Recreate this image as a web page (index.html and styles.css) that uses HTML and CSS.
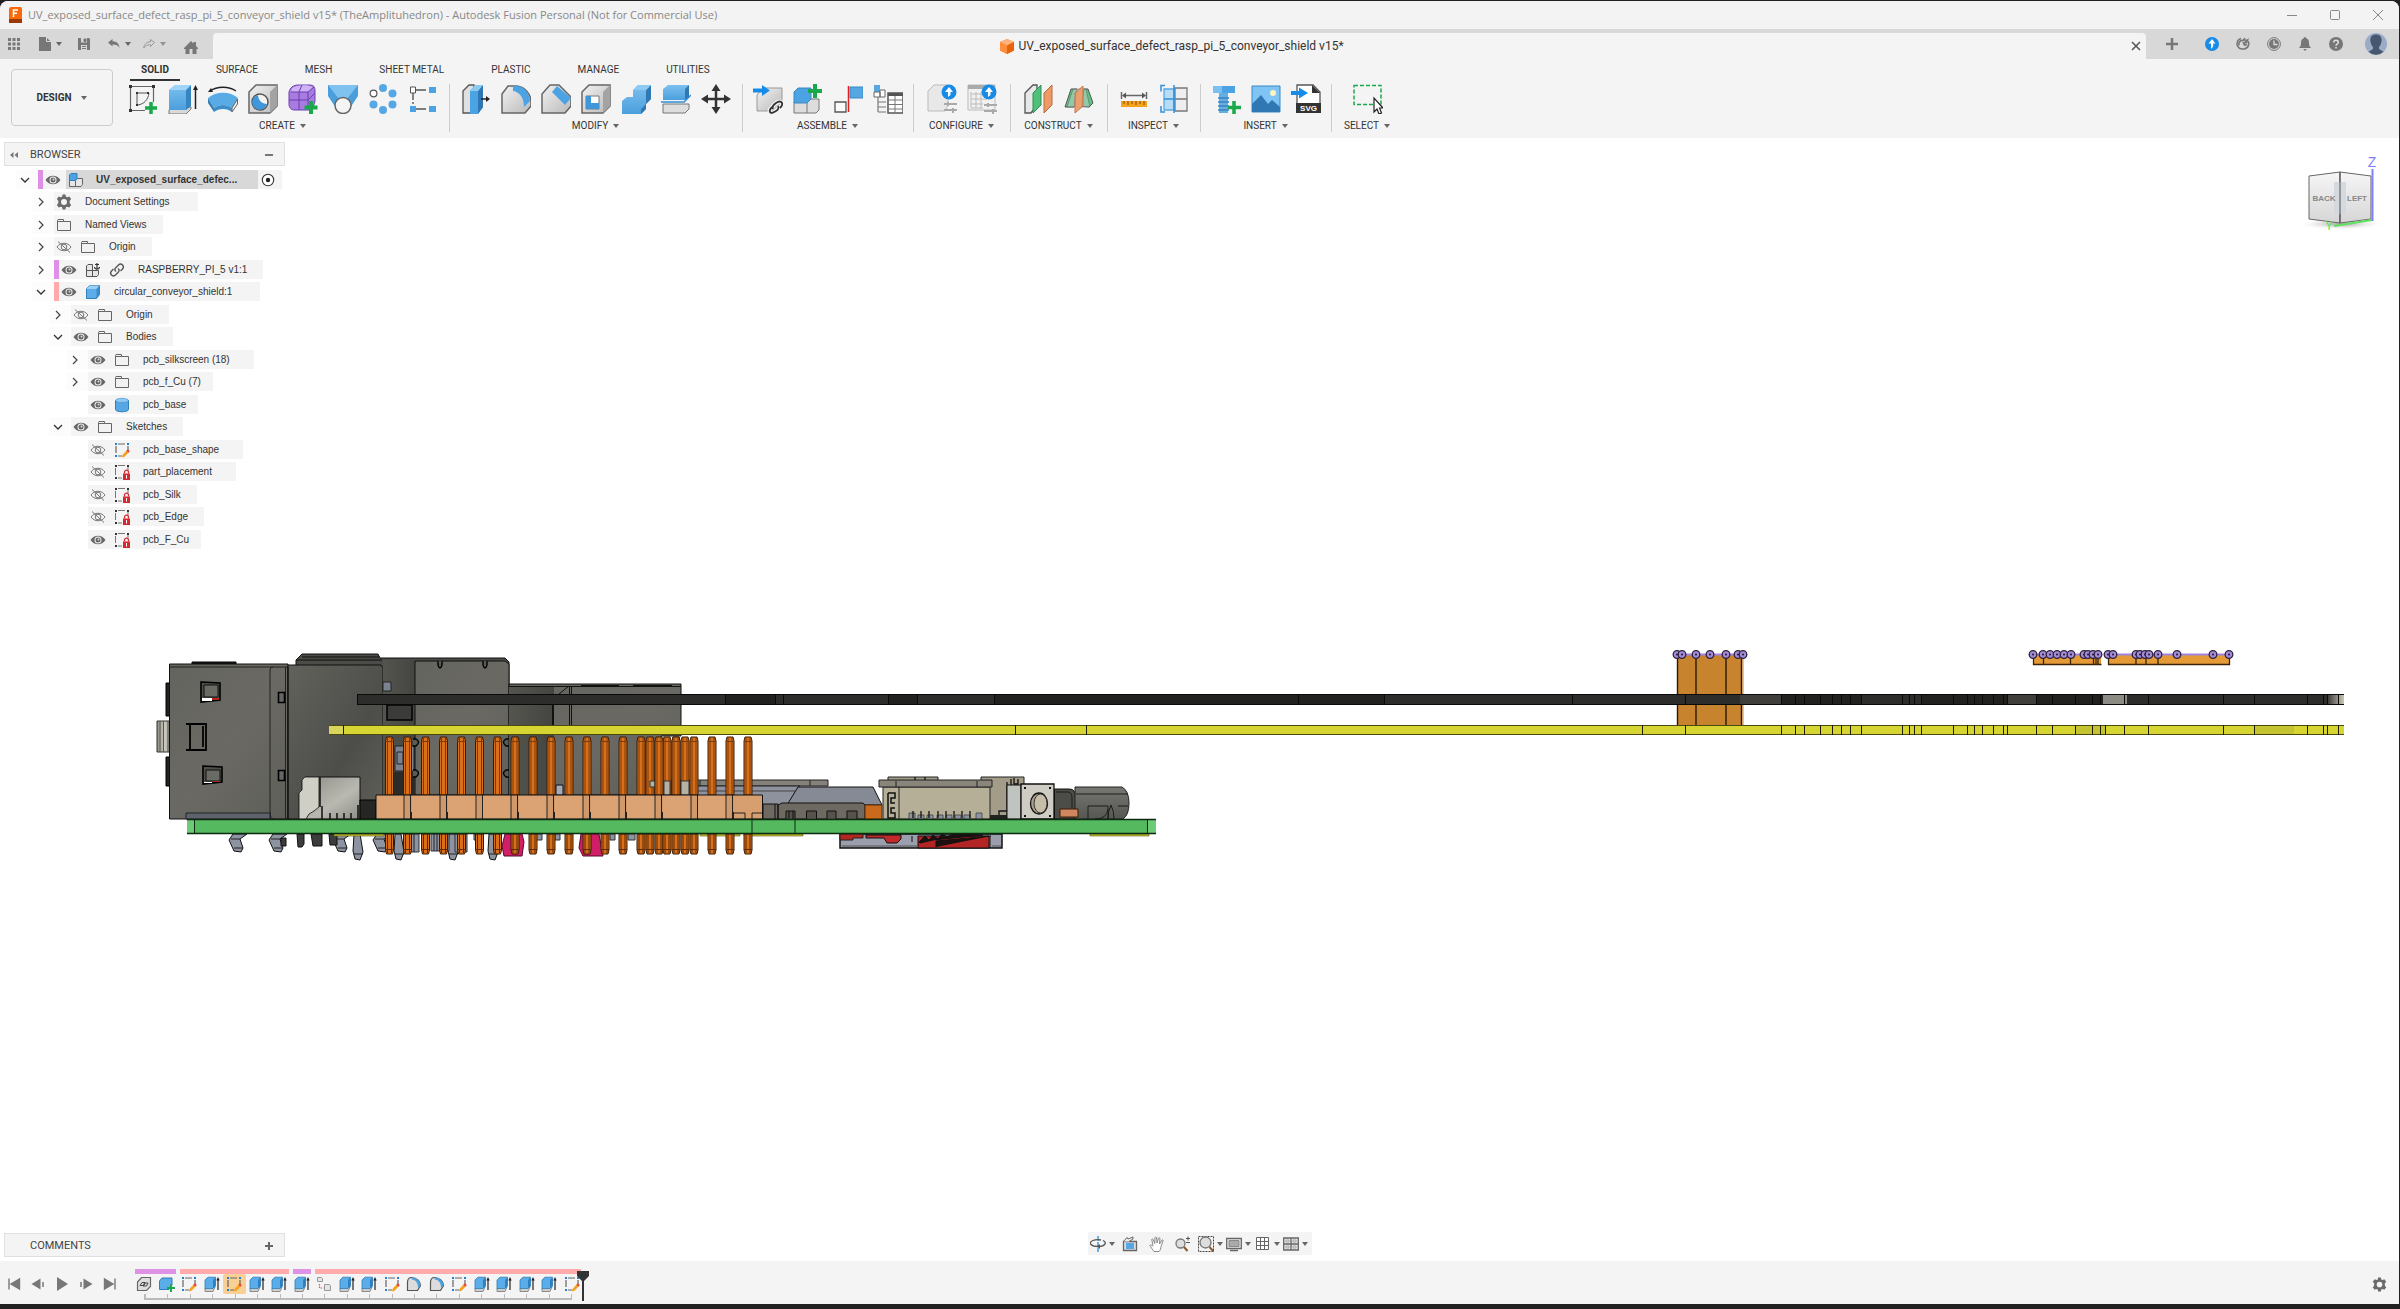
FILE: index.html
```html
<!DOCTYPE html>
<html lang="en">
<head>
<meta charset="utf-8">
<title>UV_exposed_surface_defect_rasp_pi_5_conveyor_shield v15*</title>
<link rel="stylesheet" href="styles.css">
</head>
<body>
<svg class="sprite" aria-hidden="true">
  <defs>
    <linearGradient id="gSteel" x1="0" y1="0" x2="1" y2="1"><stop offset="0" stop-color="#f2f2f2"/><stop offset="1" stop-color="#b9b9b9"/></linearGradient>
    <linearGradient id="gBlue" x1="0" y1="0" x2="0" y2="1"><stop offset="0" stop-color="#7cc0f0"/><stop offset="1" stop-color="#4b9fdc"/></linearGradient>
    <symbol id="i-caret" viewBox="0 0 8 6"><path d="M1 1h6L4 5z" fill="#666"/></symbol>
    <symbol id="i-right" viewBox="0 0 10 10"><path d="M3 1l4 4-4 4" fill="none" stroke="#444" stroke-width="1.2"/></symbol>
    <symbol id="i-down" viewBox="0 0 10 10"><path d="M1 3l4 4 4-4" fill="none" stroke="#333" stroke-width="1.3"/></symbol>
    <symbol id="i-eye" viewBox="0 0 16 16"><path d="M0.5 8C4 2.300 12 2.300 15.500 8C12 13.700 4 13.700 0.500 8z" fill="#666"/><circle cx="8" cy="8" r="3.500" fill="#f4f4f4"/><circle cx="8" cy="8" r="2.500" fill="#666"/><circle cx="8.500" cy="7.500" r="1" fill="#ddd"/></symbol>
    <symbol id="i-hidden" viewBox="0 0 16 16"><path d="M1 8C4.500 3 11.500 3 15 8C11.500 13 4.500 13 1 8zM2 2.500L14 13.500" fill="none" stroke="#777"/><circle cx="8" cy="8" r="2.800" fill="none" stroke="#777"/></symbol>
    <symbol id="i-folder" viewBox="0 0 16 16"><path d="M1.500 3.500v10h13v-9h-7v-2h-5.500zM1.500 4.500h6" fill="#f2f2f2" stroke="#666"/></symbol>
    <symbol id="i-gear" viewBox="0 0 16 16"><path fill-rule="evenodd" fill="#6b6b6b" d="M6.500 0.500h3l.4 2.200 1.300.6 2-.9 2 2.700-1.500 1.600v2.600l1.500 1.600-2 2.700-2-.9-1.300.6-.4 2.200h-3l-.4-2.200-1.300-.6-2 .9-2-2.700 1.500-1.600V6.700L.800 5.100l2-2.700 2 .9 1.300-.6zM8 5a3 3 0 100 6 3 3 0 000-6z"/></symbol>
    <symbol id="i-assembly" viewBox="0 0 16 16"><path d="M1.500 8.500h6v6h-6zM7.500 8.500l1.500-2h5.500v6l-1.500 2H7.500z" fill="#e6e6e6" stroke="#666"/><path d="M1.500 3l1.500-1.500h6v5.500l-1.500 1.500h-6z" fill="#4ba3e3" stroke="#2f7fb8"/></symbol>
    <symbol id="i-grounded" viewBox="0 0 16 16"><path d="M1.500 8.500h6v6h-6zM7.500 8.500h6v4l-1.500 2H7.500zM1.500 4l1.500-1.500h4.500v6h-6z" fill="#e6e6e6" stroke="#555"/><path d="M12 1v6M10 2.500h4M9.500 5c.5 3 4.500 3 5 0" fill="none" stroke="#333" stroke-width="1.200"/></symbol>
    <symbol id="i-link" viewBox="0 0 16 16"><path d="M7 9.500c-2-1.500-1-3 0-4l2.500-2.500c1.500-1.500 3-1 4 0s1.500 2.500 0 4l-2 2M9 6.500c2 1.500 1 3 0 4L6.500 13c-1.500 1.500-3 1-4 0s-1.500-2.500 0-4l2-2" fill="none" stroke="#555" stroke-width="1.400"/></symbol>
    <symbol id="i-cube" viewBox="0 0 16 16"><path d="M1.500 5l3-3.500h10v9l-3 4h-10z" fill="#5aade8" stroke="#2f7fb8"/><path d="M1.500 5l3-3.500h10L11.500 5z" fill="#9ad0f5"/><path d="M11.500 5v9.500l3-4v-9z" fill="#3c8ccc"/></symbol>
    <symbol id="i-cyl" viewBox="0 0 16 16"><path d="M1.500 3.500v9c0 3 13 3 13 0v-9z" fill="#56a8e4" stroke="#2f7fb8"/><ellipse cx="8" cy="3.500" rx="6.500" ry="2.200" fill="#8cc8f2" stroke="#3a8ac4" stroke-width=".6"/></symbol>
    <symbol id="i-sketch" viewBox="0 0 16 16"><path d="M4 2h7M2 4v7M14 4v5M4 14h4" stroke="#666" stroke-width="1.200"/><path d="M1 1h2v2H1zM13 1h2v2h-2zM1 13h2v2H1z" fill="#1f7fd0"/><path d="M8 15.500l.6-2.700 4-4.300 2 2-4 4.300z" fill="#f5a31c"/><path d="M12.300 8.800l1.500-1.600 2 2-1.500 1.500z" fill="#e8433a"/></symbol>
    <symbol id="i-locked" viewBox="0 0 16 16"><path d="M4 1.500h7M1.500 4v7M14 3v3M4 14h4" stroke="#777"/><path d="M1 1h2v2H1zM13 1h2v2h-2zM1 13h2v2H1z" fill="#333"/><path d="M9 9.500h7V16H9z" fill="#d42a2f"/><path d="M10.500 9.500V8.200c0-2.700 4-2.700 4 0v1.300" fill="none" stroke="#d42a2f" stroke-width="1.300"/><path d="M12 11h1v3.500h-1z" fill="#fff"/></symbol>
    <symbol id="i-radio" viewBox="0 0 16 16"><circle cx="8" cy="8" r="5.700" fill="#fff" stroke="#333" stroke-width="1.100"/><circle cx="8" cy="8" r="2.200" fill="#222"/></symbol>
    <symbol id="i-extrude" viewBox="0 0 16 16"><path d="M1 12l2-1h8l-2 4.500H1z" fill="#ccc" stroke="#777" stroke-width=".8"/><path d="M1 4l3-2.800h7.500V10L9 12.500H1z" fill="#5aade8" stroke="#2f7fb8" stroke-width=".8"/><path d="M9 4v8.500l2.500-2.500V1.200z" fill="#2f80c0"/><path d="M14 14V3" stroke="#222" stroke-width="1.200"/><path d="M12.300 4.500L14 1l1.700 3.500z" fill="#222"/></symbol>
    <symbol id="i-newcomp" viewBox="0 0 16 16"><path d="M.5 5l2.500-3h10v7l-3 4.500H.5z" fill="#5aade8" stroke="#2f7fb8"/><path d="M12 8v8M8 12h8" stroke="#19a84a" stroke-width="2"/></symbol>
    <symbol id="i-insertlink" viewBox="0 0 16 16"><path d="M1.500 6l4-4.500h9v9l-4 4h-9z" fill="#ddd" stroke="#666" stroke-width="1.200"/><path d="M4 9.500l2-3h3l-1 3zM7 10l1.500-3h3.500l-1.500 3z" fill="none" stroke="#444"/></symbol>
    <symbol id="i-joint" viewBox="0 0 16 16"><path d="M1.500 1.500h4l1 1v3h-5zM8.500 8.500h5l1 1v5h-6z" fill="#e4e4e4" stroke="#999"/><path d="M3.500 8v4h4" fill="none" stroke="#e0564c" stroke-width="1.200" stroke-dasharray="1.500 1"/></symbol>
    <symbol id="i-fillet" viewBox="0 0 16 16"><path d="M1.500 14.500v-8c0-4 2-5 4-5 5 0 9 4 9 8l-3 5z" fill="#ddd" stroke="#555" stroke-width="1.200"/><path d="M6 1.500c5 0 8.500 4 8.500 8L12 12c0-5-2-8-6.500-8.500z" fill="#4ba3e3"/></symbol>
    <symbol id="i-plus" viewBox="0 0 10 10"><path d="M5 1v8M1 5h8" stroke="#666" stroke-width="2"/></symbol>
    <symbol id="i-minus" viewBox="0 0 10 10"><path d="M1 5h8" stroke="#777" stroke-width="2"/></symbol>

    <g id="pin"><path d="M-4 741l1-4h6l1 4v54h-8z" fill="#d96f18" stroke="#3a1c06" stroke-width="1"/><path d="M-2 738v57M2 738v57M-4 741.500h8" stroke="#7a3a0a" stroke-width="1" fill="none"/></g>
    <g id="tail"><path d="M-4 834v16l1 4h6l1-4v-16z" fill="#d96f18" stroke="#3a1c06" stroke-width="1"/><path d="M-2 834v19M2 834v19M-4 849.500h8" stroke="#5a2a06" fill="none"/></g>
    <g id="cell"><path d="M0 795h28v24H0z" fill="#dba374"/><path d="M28 795h8v24h-8z" fill="#d0996c"/><path d="M28 795v24M34.500 795v24M35.500 812v7" stroke="#222" stroke-width="1"/></g>
    <g id="leg"><path d="M4 834h14l-7 5 3 9-2 4-7-1-5-11z" fill="#8d93a1" stroke="#111"/><path d="M2 839h9M5 848h9" stroke="#222" fill="none"/></g>
    <g id="foot"><path d="M2 834h6l3 18-3 8-5-1-2-8z" fill="#8d93a1" stroke="#111"/><path d="M2 854h9" stroke="#222"/></g>
    <g id="pt"><circle r="3.800" fill="#a58bd6" stroke="#2b2440" stroke-width="1.300"/><circle r="1" fill="#1b1530"/></g>
  </defs>
</svg>

<div class="window">
  <header class="titlebar">
    <svg class="app-logo" viewBox="0 0 13 16"><path d="M0 1.500L1.500 0H12l1 1.500V16H0z" fill="#fb6a0a"/><path d="M0 12h13v4H0z" fill="#9c3a06"/><path d="M4.500 10V3h4.500M4.500 6.300h3.500" stroke="#fff" stroke-width="1.500" fill="none"/></svg>
    <h1>UV_exposed_surface_defect_rasp_pi_5_conveyor_shield v15* (TheAmplituhedron) - Autodesk Fusion Personal (Not for Commercial Use)</h1>
    <div class="win-controls">
      <button aria-label="Minimize"><svg viewBox="0 0 12 12"><path d="M1 6.500h10" stroke="#888"/></svg></button>
      <button aria-label="Maximize"><svg viewBox="0 0 12 12"><rect x="1.500" y="1.500" width="9" height="9" rx="1" fill="none" stroke="#888"/></svg></button>
      <button aria-label="Close"><svg viewBox="0 0 12 12"><path d="M1 1l10 10M11 1L1 11" stroke="#888"/></svg></button>
    </div>
  </header>

  <div class="strip">
    <div class="quick">
      <button class="q-grid" aria-label="Data panel"><svg viewBox="0 0 12 12"><path d="M0 0h3v3H0zM4.500 0h3v3h-3zM9 0h3v3H9zM0 4.500h3v3H0zM4.500 4.500h3v3h-3zM9 4.500h3v3H9zM0 9h3v3H0zM4.500 9h3v3h-3zM9 9h3v3H9z" fill="#777"/></svg></button>
      <button class="q-file" aria-label="File"><svg viewBox="0 0 12 14"><path d="M0 0h7l5 5v9H0z" fill="#777"/><path d="M7.500 0v4.500H12" fill="none" stroke="#d8d8d8"/></svg><svg class="caret"><use href="#i-caret"/></svg></button>
      <button class="q-save" aria-label="Save"><svg viewBox="0 0 12 12"><path fill-rule="evenodd" d="M0 0h11l1 1v11H0zM3 0v4.500h6V0zM3 7v5h6V7z" fill="#777"/><path d="M6 1h2v2.500H6zM4 8.500h4M4 10.500h4" fill="#777" stroke="#777"/></svg></button>
      <button class="q-undo" aria-label="Undo"><svg viewBox="0 0 12 12"><path d="M0 4.500L4.500 1v2.300c4 0 6.500 2 7 6.700-1.500-2.500-3.500-3.500-7-3.400V8.500z" fill="#777"/></svg><svg class="caret"><use href="#i-caret"/></svg></button>
      <button class="q-redo" aria-label="Redo"><svg viewBox="0 0 12 12"><path d="M11.500 4.500L7.500 1.500v2.300C3.500 4 1 6 .8 10c1.500-2.500 3.500-3.300 6.700-3.200v1.700z" fill="none" stroke="#999"/></svg><svg class="caret faded"><use href="#i-caret"/></svg></button>
      <button class="q-home" aria-label="Home"><svg viewBox="0 0 14 13"><path fill-rule="evenodd" d="M7 0l2.500 2.500V1H12v4l2 2v1h-1.500v5h-11V8H0V7zM5.500 8v5h3V8z" fill="#777"/></svg></button>
    </div>
    <div class="doc-tab">
      <a class="doc-name" href="#"><svg viewBox="0 0 14 15"><path d="M7 0l7 3v8.500L7 15 0 11.500V3z" fill="#f47b20"/><path d="M7 0l7 3-7 3.500L0 3z" fill="#ffb37a"/><path d="M0 3l7 3.500V15l-7-3.500z" fill="#ff8f3d"/><path d="M7 6.500L14 3v8.500L7 15z" fill="#e8640c"/></svg><span>UV_exposed_surface_defect_rasp_pi_5_conveyor_shield v15*</span></a>
      <button aria-label="Close tab"><svg viewBox="0 0 10 10"><path d="M1 1l8 8M9 1L1 9" stroke="#555" stroke-width="1.500"/></svg></button>
    </div>
    <div class="account">
      <button class="add" aria-label="New tab"><svg viewBox="0 0 14 14"><path d="M7 1v12M1 7h12" stroke="#777" stroke-width="2.500"/></svg></button>
      <button aria-label="Updates"><svg viewBox="0 0 14 14"><circle cx="7" cy="7" r="7" fill="#168be8"/><path d="M7 2l3.500 4.500H8.200V9.500L6 12V6.500H3.500z" fill="#fff"/></svg></button>
      <button aria-label="Extensions"><svg viewBox="0 0 14 14"><path d="M5 1.500A6 6 0 001.200 8 6 6 0 0012.800 7c0-1-.3-2-.8-2.800" fill="none" stroke="#777" stroke-width="1.600"/><path d="M3 8.500c-1-3 1.500-5.500 4-5L8.500 2l1 2 2-1-1 2.500-3 .5 1 2 2.500-.5" fill="none" stroke="#777" stroke-width="1.700"/></svg></button>
      <button aria-label="Job status"><svg viewBox="0 0 14 14"><circle cx="7" cy="7" r="6.400" fill="none" stroke="#777"/><circle cx="7" cy="7" r="5" fill="#777"/><path d="M7 3.500V7.500h3.500" stroke="#ddd" stroke-width="1.300" fill="none"/></svg></button>
      <button aria-label="Notifications"><svg viewBox="0 0 14 14"><path d="M7 0c1 0 1.200.8 1.200 1.300C10.500 2 11 4 11 6c0 2.500.5 3.500 1.800 4.500V11H1.200v-.5C2.500 9.500 3 8.500 3 6c0-2 .5-4 2.800-4.700C5.800.8 6 0 7 0zM5.500 12h3c0 2-3 2-3 0z" fill="#777"/></svg></button>
      <button aria-label="Help"><svg viewBox="0 0 14 14"><circle cx="7" cy="7" r="7" fill="#777"/><path d="M4.800 5.500C4.800 2.500 9.300 2.700 9.300 5.300 9.300 7 7 7 7 8.700M7 10v1.600" stroke="#e2e2e2" stroke-width="1.500" fill="none"/></svg></button>
      <button class="avatar" aria-label="Profile"><svg viewBox="0 0 22 22"><circle cx="11" cy="11" r="11" fill="#9aacc6"/><path d="M11 1.500c4 0 6 2.500 5.600 6.500-.3 3-1.600 5-2.600 6v2l4.500 2.800a11 11 0 01-15 0L8 16v-2c-1-1-2.300-3-2.600-6C5 4 7 1.500 11 1.500z" fill="#46576f"/></svg></button>
    </div>
  </div>

  <div class="ribbon">
    <button class="workspace">DESIGN <svg class="caret"><use href="#i-caret"/></svg></button>
    <div class="tools">
      <nav class="tabs">
        <button class="active">SOLID</button><button>SURFACE</button><button>MESH</button><button>SHEET METAL</button><button>PLASTIC</button><button>MANAGE</button><button>UTILITIES</button>
      </nav>
      <div class="groups">
        <section class="group">
          <div class="icons">
            <button aria-label="Create Sketch"><svg viewBox="0 0 30 30"><path d="M4 2.500h20M2.500 4v21M25.500 4v14M4 26.500h13" stroke="#666" stroke-width="1.200"/><path d="M1 1h3v3H1zM24 1h3v3h-3zM1 25h3v3H1z" fill="#333"/><path d="M9 9v12M9 9h12c-1 7-5 11-11 12" fill="none" stroke="#555"/><path d="M8 8h2v2H8zM19 8h2v2h-2zM8 20h2v2H8z" fill="#333"/><path d="M23 18v12M17 24h12" stroke="#19a84a" stroke-width="3.500"/></svg></button>
            <button aria-label="Extrude"><svg viewBox="0 0 30 30"><path d="M1 26l4-3h18v2l-5 5H1z" fill="#d9d9d9" stroke="#777"/><path d="M1 6l6-5h16v21l-5 4H1z" fill="url(#gBlue)"/><path d="M18 6l5-5v21l-5 4z" fill="#3784c2"/><path d="M1 6l6-5h16l-5 5z" fill="#9fd3f7"/><path d="M27.500 25V4" stroke="#222" stroke-width="1.500"/><path d="M25 6l2.500-5L30 6z" fill="#222"/></svg></button>
            <button aria-label="Revolve"><svg viewBox="0 0 30 30"><path d="M2 7C9 2 21 2 28 7" fill="none" stroke="#222" stroke-width="1.300"/><path d="M0 8l3-4 2 4z" fill="#222"/><path d="M0 14c8-7 22-7 30 0l-6 10c-5-4-13-4-18 0z" fill="#59abe6"/><path d="M0 14v5l6 9v-4z" fill="#377fb8"/><path d="M6 24c5-4 13-4 18 0v4c-5-4-13-4-18 0z" fill="#3e8ecb"/><path d="M24 24l5.500-9v5L24 28z" fill="#eee" stroke="#666"/></svg></button>
            <button aria-label="Hole"><svg viewBox="0 0 30 30"><path d="M1 8l7-7h21v21l-7 7H1z" fill="url(#gSteel)" stroke="#666" stroke-width="1.500"/><path d="M22 8v21l7-7V1z" fill="#a3a3a3"/><circle cx="12" cy="18" r="8" fill="#f2f2f2" stroke="#555" stroke-width="1.500"/><path d="M10 11a7.500 7.500 0 109 9c-5 0-9-4-9-9z" fill="#3f96d8"/></svg></button>
            <button aria-label="Create Form"><svg viewBox="0 0 30 30"><path d="M1 8c1-4 4-7 9-7h11c5 0 6 2 6 6v9c0 5-3 8-6 10H7c-4 0-6-2-6-6z" fill="#a77be0" stroke="#6a3fb0"/><path d="M4 4c4-3 15-4 21-1l-5 5H3z" fill="#cfb2f5"/><path d="M1 16h19l7-7M11 8v18M14 1l-3 7M3 8h17l6-5M20 8v17" fill="none" stroke="#6a3fb0"/><path d="M23 17v13M16.500 23.500h13" stroke="#19a84a" stroke-width="4"/></svg></button>
            <button aria-label="Loft"><svg viewBox="0 0 30 30"><path d="M0 1h30v11l-8 12H8L0 12z" fill="#4a9edb"/><path d="M0 1h30L19 15h-8z" fill="#7fc2f0"/><circle cx="15" cy="21.500" r="8" fill="#f4f4f4" stroke="#666" stroke-width="1.500"/></svg></button>
            <button aria-label="Circular Pattern"><svg viewBox="0 0 30 30"><g fill="#56a8e4"><circle cx="15" cy="4" r="4"/><circle cx="24.500" cy="9.500" r="4"/><circle cx="24.500" cy="20.500" r="4"/><circle cx="15" cy="26" r="4"/><circle cx="5.500" cy="20.500" r="4"/></g><circle cx="5.500" cy="9.500" r="3.400" fill="#fff" stroke="#555" stroke-width="1.200"/></svg></button>
            <button aria-label="Rectangular Pattern"><svg viewBox="0 0 30 30"><path d="M5 6v18M8 6h12M8 25h12" stroke="#555" stroke-width="1.400" stroke-dasharray="10 2 2 2"/><path d="M21 3h7v6h-7zM2 22h6v6H2zM21 22h7v6h-7z" fill="#4ba3e3"/><path d="M2.500 3h5v6h-5z" fill="#fff" stroke="#555"/></svg></button>
          </div>
          <button class="label">CREATE <svg class="caret"><use href="#i-caret"/></svg></button>
        </section>
        <section class="group">
          <div class="icons">
            <button aria-label="Press Pull"><svg viewBox="0 0 30 30"><path d="M2 7l6-6h5v28H2z" fill="#e0e0e0" stroke="#555" stroke-width="1.300"/><path d="M9 7l5-6h8v22l-5 7H9z" fill="#4ba3e3"/><path d="M17 7l5-6v22l-5 7z" fill="#2f78b4"/><path d="M9 7l5-6h8l-5 6z" fill="#8ccaf4"/><path d="M20 15h7" stroke="#222" stroke-width="1.500"/><path d="M25 12l4 3-4 3z" fill="#222"/></svg></button>
            <button aria-label="Fillet"><svg viewBox="0 0 30 30"><path d="M1 29V10l6-8h9c8 1 14 8 14 16v4l-6 7z" fill="url(#gSteel)" stroke="#666" stroke-width="1.500"/><path d="M12 2c11-2 17 8 17 15l-6 6C23 14 19 8 12 7z" fill="#4ba3e3"/></svg></button>
            <button aria-label="Chamfer"><svg viewBox="0 0 30 30"><path d="M1 29V10l8-9h9l12 12v9l-6 7z" fill="url(#gSteel)" stroke="#666" stroke-width="1.500"/><path d="M16 2l14 12-6 7L11 8z" fill="#4ba3e3"/></svg></button>
            <button aria-label="Shell"><svg viewBox="0 0 30 30"><path d="M1 8l7-7h21v21l-7 7H1z" fill="url(#gSteel)" stroke="#666" stroke-width="1.500"/><path d="M22 8v21l7-7V1z" fill="#a3a3a3"/><path d="M5 12h13v13H5z" fill="#fff" stroke="#777"/><path d="M5 12l5 0v7h8v6H5z" fill="#3f96d8"/></svg></button>
            <button aria-label="Combine"><svg viewBox="0 0 30 30"><path d="M12 6l5-5h13v14l-5 5v5l-5 5H1V17l5-4h6z" fill="url(#gBlue)"/><path d="M25 6l5-5v14l-5 5zM20 25l5-5v5l-5 5z" fill="#2f78b4"/><path d="M12 6l5-5h13l-5 5z" fill="#8ccaf4"/></svg></button>
            <button aria-label="Split Body"><svg viewBox="0 0 30 30"><path d="M2 20h26v5l-4 4H2z" fill="#ddd" stroke="#777"/><path d="M2 5l5-4h21v12l-4 3H2z" fill="url(#gBlue)"/><path d="M24 5l4-4v12l-4 3z" fill="#2f78b4"/><path d="M0 18h23l7-7" fill="none" stroke="#2f8fdc" stroke-width="1.500"/></svg></button>
            <button aria-label="Move"><svg viewBox="0 0 30 30"><path d="M15 4v22M4 15h22" stroke="#333" stroke-width="2.500"/><path d="M10.500 7L15 0l4.500 7zM10.500 23l4.500 7 4.500-7zM7 10.500L0 15l7 4.500zM23 10.500l7 4.500-7 4.500z" fill="#333"/></svg></button>
          </div>
          <button class="label">MODIFY <svg class="caret"><use href="#i-caret"/></svg></button>
        </section>
        <section class="group snug">
          <div class="icons">
            <button aria-label="Insert Component"><svg viewBox="0 0 30 30"><path d="M4 11l6-7h19v16l-6 7H4z" fill="url(#gSteel)" stroke="#999"/><path d="M0 6.500h10" stroke="#168be8" stroke-width="4"/><path d="M9 1l8 5.500L9 12z" fill="#168be8"/><path d="M20 25c-1-2 0-4 3-6s5-2 6 0 0 3-2 5M25 22c1 2 0 4-2 5s-5 3-6 1 0-3 2-5" fill="none" stroke="#f4f4f4" stroke-width="4"/><path d="M20 25c-1-2 0-4 3-6s5-2 6 0 0 3-2 5M25 22c1 2 0 4-2 5s-5 3-6 1 0-3 2-5" fill="none" stroke="#333" stroke-width="1.800"/></svg></button>
            <button aria-label="New Component"><svg viewBox="0 0 30 30"><path d="M1 18h13l4-3h8v11l-3 3H1z" fill="#ddd" stroke="#777"/><path d="M14 18v11" stroke="#777"/><path d="M1 8l4-4h13v11l-4 4H1z" fill="#4ba3e3" stroke="#3a88c4"/><path d="M22 0v14M15 7h14" stroke="#19a84a" stroke-width="4"/></svg></button>
            <button aria-label="Joint"><svg viewBox="0 0 30 30"><path d="M17 3h13v11H17z" fill="#56a8e4" stroke="#3a88c4"/><path d="M2 18h11v10H2z" fill="#fafafa" stroke="#555" stroke-width="1.300"/><path d="M15.500 2v26" stroke="#e02020" stroke-width="1.500"/></svg></button>
            <button aria-label="Bill of Materials"><svg viewBox="0 0 30 30"><path d="M1 1h6v7H1z" fill="#56a8e4"/><path d="M1 8h6v5H1zM7 6h5v7H7z" fill="#fff" stroke="#666"/><path d="M5 13v15M5 18h8M5 23h8M5 28h8" stroke="#777" fill="none" stroke-width="1.200"/><path d="M15 9h15v20H15z" fill="#fff" stroke="#555" stroke-width="1.500"/><path d="M15 9h15v3H15z" fill="#555"/><path d="M15 16h15M15 20.500h15M15 25h15M22 12v17" stroke="#777"/></svg></button>
          </div>
          <button class="label">ASSEMBLE <svg class="caret"><use href="#i-caret"/></svg></button>
        </section>
        <section class="group roomy">
          <div class="icons">
            <button aria-label="Configure Design"><svg viewBox="0 0 30 30"><path d="M1 7l6-6h14v20l-3 6H1z" fill="#e8e8e8" stroke="#bbb"/><path d="M17 20h13M17 26h13M21 18v4M26 24v5" stroke="#aaa" stroke-width="2"/><circle cx="22" cy="8" r="7.500" fill="#168be8"/><path d="M22 3l4 5h-2.500v3L21 13V8h-3z" fill="#fff"/></svg></button>
            <button aria-label="Configuration Table"><svg viewBox="0 0 30 30"><path d="M1 1h27v25H1z" fill="#f1f1f1" stroke="#bbb"/><path d="M1 1h27v4H1z" fill="#aaa"/><path d="M4 10h16M4 15h16M4 20h12M4 8v16h12M9 8v16M14 8v16" fill="none" stroke="#bbb"/><path d="M17 21h13M17 27h13M21 19v4M26 25v5" stroke="#aaa" stroke-width="2"/><circle cx="22" cy="8" r="7.500" fill="#168be8"/><path d="M22 3l4 5h-2.500v3L21 13V8h-3z" fill="#fff"/></svg></button>
          </div>
          <button class="label">CONFIGURE <svg class="caret"><use href="#i-caret"/></svg></button>
        </section>
        <section class="group roomy">
          <div class="icons">
            <button aria-label="Offset Plane"><svg viewBox="0 0 30 30"><path d="M1 9l8-8h4v20l-6 8H1z" fill="#e8e8e8" stroke="#555" stroke-width="1.300"/><path d="M9 9l8-8v20l-8 8z" fill="#4fc07a" stroke="#2f8f54"/><path d="M20 9l8-8v20l-8 8z" fill="#ee9a66" stroke="#b96a3a"/></svg></button>
            <button aria-label="Midplane"><svg viewBox="0 0 30 30"><path d="M1 23L7 5h6l-3 18zM17 22l3-17h4l5 14-4 4z" fill="#5cc585" stroke="#555"/><path d="M3 23L9 5h13l4 18z" fill="#ccc" opacity=".5" stroke="#666"/><path d="M11 9l8-7v20l-8 7z" fill="#ee9a66" stroke="#b96a3a" opacity=".9"/></svg></button>
          </div>
          <button class="label">CONSTRUCT <svg class="caret"><use href="#i-caret"/></svg></button>
        </section>
        <section class="group">
          <div class="icons">
            <button aria-label="Measure"><svg viewBox="0 0 30 30"><path d="M2.500 8v7M27.500 8v7M5 11.500h20" stroke="#666" stroke-width="1.500"/><path d="M3 11.500l4-3v6zM27 11.500l-4-3v6z" fill="#555"/><path d="M2 17h26v6H2z" fill="#f5a31c"/><path d="M5 17v3M9 17v4M13 17v3M17 17v4M21 17v3M25 17v4" stroke="#7a4c00"/></svg></button>
            <button aria-label="Interference"><svg viewBox="0 0 30 30"><path d="M16 4h12v23H16zM16 15h12" fill="#eee" stroke="#777" stroke-width="1.300"/><path d="M5 5h10v21H5z" fill="#b9dcf6" stroke="#56a8e4" stroke-width="1.300"/><path d="M5 15h10M6 1.500H2v6M2 22v6h4M15 1v28" fill="none" stroke="#2f8fdc" stroke-width="1.500"/></svg></button>
          </div>
          <button class="label">INSPECT <svg class="caret"><use href="#i-caret"/></svg></button>
        </section>
        <section class="group snug">
          <div class="icons">
            <button aria-label="Insert Fastener"><svg viewBox="0 0 30 30"><path d="M2 2h22v7H2z" fill="#4ba3e3"/><path d="M2 2h9v7H2z" fill="#7cc0f0"/><path d="M8 9h9v20H8z" fill="#64aee4"/><path d="M7 14h11M7 18h11M7 22h11M7 26h11" stroke="#3a82ba" stroke-width="1.300"/><path d="M23 17v13M17 23.500h13" stroke="#19a84a" stroke-width="3.500"/></svg></button>
            <button aria-label="Insert Image"><svg viewBox="0 0 30 30"><path d="M1 2h28v26H1z" fill="#7fc4f4" stroke="#3a88c4"/><path d="M1 20l9-9 7 9 4-4 8 7v5H1z" fill="#2f78b4"/><circle cx="22" cy="9" r="3" fill="#fff6c0"/></svg></button>
            <button aria-label="Insert SVG"><svg class="svgfile" viewBox="0 0 30 30"><path d="M6 1h16l7 7v20H6z" fill="#fff" stroke="#555" stroke-width="1.300"/><path d="M21 1v8h8z" fill="#333"/><path d="M5 19h25v10H5z" fill="#333"/><path d="M0 9h9" stroke="#168be8" stroke-width="4"/><path d="M8 3.500l9 5.500-9 5.500z" fill="#168be8"/><text x="17.500" y="27" text-anchor="middle" fill="#fff">SVG</text></svg></button>
          </div>
          <button class="label">INSERT <svg class="caret"><use href="#i-caret"/></svg></button>
        </section>
        <section class="group last">
          <div class="icons">
            <button aria-label="Select"><svg viewBox="0 0 30 30"><rect x="1" y="1.500" width="27" height="19" fill="none" stroke="#19a84a" stroke-width="1.500" stroke-dasharray="4 2"/><path d="M21 14v14l3-3 2 5 2.500-1-2-5h3.500z" fill="#fff" stroke="#222" stroke-width="1.200"/></svg></button>
          </div>
          <button class="label">SELECT <svg class="caret"><use href="#i-caret"/></svg></button>
        </section>
      </div>
    </div>
  </div>

  <main class="canvas">
    <svg class="scene" viewBox="0 138 2399 1123" role="img" aria-label="Side view of board assembly">
      <defs>
        <linearGradient id="gBody" x1="0" y1="0" x2="1" y2="1"><stop offset="0" stop-color="#64645e"/><stop offset=".5" stop-color="#6a6963"/><stop offset="1" stop-color="#5f5f59"/></linearGradient>
        <linearGradient id="gBody2" x1="0" y1="0" x2="1" y2="1"><stop offset="0" stop-color="#62625c"/><stop offset=".6" stop-color="#4d4e4a"/><stop offset="1" stop-color="#60605a"/></linearGradient>
        <linearGradient id="gDark" x1="0" y1="0" x2="1" y2="0"><stop offset="0" stop-color="#55554f"/><stop offset="1" stop-color="#444541"/></linearGradient>
        <linearGradient id="gPort" x1="0" y1="0" x2="1" y2="0"><stop offset="0" stop-color="#8f8d84"/><stop offset=".5" stop-color="#cfccc0"/><stop offset="1" stop-color="#77756c"/></linearGradient>
        <linearGradient id="gSock" x1="0" y1="0" x2="1" y2="1"><stop offset="0" stop-color="#8b8a83"/><stop offset=".6" stop-color="#b9b8b1"/><stop offset="1" stop-color="#8d8c85"/></linearGradient>
        <linearGradient id="gEnd" x1="0" y1="0" x2="1" y2="0"><stop offset="0" stop-color="#2b2b29"/><stop offset="1" stop-color="#cdc9b6"/></linearGradient>
        <linearGradient id="gPlug" x1="0" y1="0" x2="0" y2="1"><stop offset="0" stop-color="#777772"/><stop offset="1" stop-color="#565652"/></linearGradient>
      </defs>
      <!-- legs below the board -->
      <use href="#leg" x="229"/><use href="#leg" x="269"/><use href="#leg" x="333"/><use href="#leg" x="373"/>
      <use href="#foot" x="352"/><use href="#foot" x="393"/><use href="#foot" x="447"/><use href="#foot" x="487"/>
      <path d="M297 834h7v10l-2 3h-4zM311 834h11v12h-9zM329 834h8v11h-7zM281 838h5v8h-5z" fill="#3c3d3b" stroke="#111"/>
      <path d="M410 834h9v18h-9zM431 834h18v17h-18zM455 834h12v18h-12zM474 834h5v6h-5zM536 834h6v6h-6zM555 834h5v6h-5zM610 834h5v6h-5zM628 834h7v6h-7z" fill="#8d93a1" stroke="#333"/>
      <path d="M414 834v18M434 834v17M437 834v17M440 834v17M444 834v17M459 834v17M463 834v17" stroke="#222"/>
      <path d="M505 834h17l2 8-2 14h-18l-2-10zM581 834h18l4 22h-20l-4-8z" fill="#d01f66" stroke="#5a0a2a"/>
      <path d="M334 834h50v2h-50zM700 834h40v2h-40zM744 834h59v2h-59zM1090 834h59v2h-59z" fill="#c9c52e" stroke="#555510" stroke-width=".6"/>

      <!-- connector housings -->
      <path d="M157 721h16v31h-16z" fill="url(#gPort)" stroke="#333"/><path d="M160 721v31M163.500 721v31M168 721v31" stroke="#555"/>
      <path d="M166 683h4v33h-4zM166 757h4v29h-4zM192 664v-2h44v2z" fill="#222" stroke="#000"/>
      <path d="M169.500 664H288v155H169.500z" fill="url(#gBody)" stroke="#111"/>
      <path d="M169.500 667H288M270 819V670q0-3 3-3M270 812q0 7 4 7M285.500 667v152" stroke="#222" fill="none"/>
      <path d="M186 813h84v6h-84z" fill="#5d626d" stroke="#222"/>
      <path d="M201 682l19 1v17l-19 2zM203 766l19 1v15l-19 2z" fill="#4f4f4a" stroke="#000" stroke-width="1.600"/>
      <path d="M204 685h14v12h-14zM206 770h14v11h-14z" fill="#6b6b65" stroke="#111"/>
      <path d="M202 698h10v3h-10zM204 782h8v1h-8z" fill="#fff"/><path d="M212 698h7v2h-7zM213 781h7v1h-7z" fill="#b3261e"/>
      <path d="M186 724h20v26h-20M190 724v26M203 726v21" fill="none" stroke="#000" stroke-width="1.800"/>
      <path d="M278.500 692.500h6v10h-6zM278.500 770.500h6v10h-6z" fill="#666" stroke="#000" stroke-width="1.600"/>
      <path d="M296 664v-4l6-6h76l2 4h125l4 4v157H296z" fill="#4b4c48" stroke="#111"/>
      <path d="M288 665h93l2 3v151h-95z" fill="url(#gBody2)" stroke="#111"/>
      <path d="M296 660h86M302 657h77M288 667v152" stroke="#111" fill="none"/>
      <path d="M383 660h32v159h-32z" fill="url(#gDark)"/>
      <path d="M387 705h25v15h-25z" fill="#3b3c39" stroke="#000" stroke-width="1.500"/>
      <path d="M383 682h8v9h-8zM395 746h19v25h-19zM397 752h6v12h-6z" fill="#7c8290" stroke="#222"/>
      <path d="M394 772h20v23h-20z" fill="#2b2b29"/>
      <path d="M415 661h90l4 3v131h-94z" fill="url(#gBody)" stroke="#111"/>
      <path d="M438 661v4q2 6 4 0v-4M483 661v4q2 6 4 0v-4M413 739h3q5 3 0 7h-3M413 770h3q5 3 0 7h-3M509 739h-3q-5 3 0 7h3M509 770h-3q-5 3 0 7h3" fill="#5a5a55" stroke="#000" stroke-width="1.400"/>
      <path d="M509 684h172v52h-20v59H509z" fill="url(#gBody)" stroke="#111"/>
      <path d="M509 687h45v108h-45z" fill="url(#gDark)"/>
      <path d="M509 686.500h172M569.500 687v48M571.500 687v48M559 694l10-8M581 685.500h38M633 685.500h39" stroke="#111" fill="none"/>
      <path d="M553 705v30" stroke="#111" stroke-width="2"/>
      <path d="M556 785h7v10h-7z" fill="#a5abb8" stroke="#111"/>
      <path d="M299 819v-26l3-3v-10l3-3h55v42z" fill="url(#gSock)" stroke="#111"/>
      <path d="M299 819v-26l3-3v-10l3-3h14v30l-5 4-5 3-3 5z" fill="#cfcfc6" stroke="#333"/>
      <path d="M320 777v30M322 806v13M330 813v6M337 813v6M344 813v6M351 813v6M358 805v14" stroke="#111" stroke-width="1.500"/>
      <path d="M360 800h16v19h-16z" fill="#262624" stroke="#000"/>

      <!-- right-hand components -->
      <path d="M648 780h180v6H648z" fill="#85827b" stroke="#222"/><path d="M700 780v6M810 780v6" stroke="#222"/>
      <path d="M665 786h135l-12 20H665z" fill="#8e929c" stroke="#222"/><path d="M670 791h125" stroke="#444"/>
      <path d="M787 805l11-18h75l9 18z" fill="#868a94" stroke="#111"/>
      <path d="M763 804h15v15h-15zM778 805l4-2h81l2 2v14h-87z" fill="#6e6a62" stroke="#111"/>
      <path d="M786 819v-8h9v8M806.500 819v-8h10v8M827 819v-8h9v8M847 819v-8h10v8M789 811v8M793 811v8M775 804v15" fill="#57534c" stroke="#111"/>
      <path d="M865 805h17v14h-17z" fill="#cb6a1c" stroke="#5a2a06"/>
      <path d="M888 777h50v4h-50zM981 777h43v34h-17v8h-18v-32h-8z" fill="#a29c88" stroke="#222"/>
      <path d="M1011 779v32h-12v8M1007 782v29M1014 778v6h4v-5M915 777v4M925 777v4" fill="none" stroke="#111" stroke-width="1.300"/>
      <path d="M883 787h107v32H883z" fill="#b6af97" stroke="#222"/><path d="M879 780h113v7H879z" fill="#8a857a" stroke="#222"/><path d="M896 781v6M977 781v6M899 787v32" stroke="#222"/>
      <path d="M888 793h7v5h-4v5h4M888 793v25h7v-5h-4v-5h4" fill="none" stroke="#111" stroke-width="1.500"/>
      <path d="M909 813h6v6h-6zM918 815h6v4h-6zM927 815h6v4h-6zM937 815h6v4h-6zM946 815h6v4h-6zM955 815h6v4h-6zM964 815h6v4h-6zM976 813h6v6h-6z" fill="#8d93a1" stroke="#333" stroke-width=".7"/>
      <path d="M913 811v7M921 811v7M929 811v7M938 811v7M946 811v7M954 811v7M962 811v7M970 811v7" stroke="#111" stroke-width="1.300"/>
      <path d="M990 815h17v4h-17z" fill="#222"/>
      <path d="M1054.500 789h15q6 0 6 8v22h-21z" fill="#4c4c49" stroke="#111"/><path d="M1075 787h47q7 4 7 16t-6 16h-48z" fill="url(#gPlug)" stroke="#222"/>
      <path d="M1056 792h12q4 0 4 6v10M1088 819v-13h20v13M1108 819q0-8 3-14 3 6 3 14M1095 819q12 0 13-10M1076 794h52M1118 806h10" fill="none" stroke="#1c1c1a"/>
      <path d="M1060 809h18v8h-18z" fill="#d1875d" stroke="#3a1c06"/>
      <path d="M1007 785h14v34h-14z" fill="#c0c4c0" stroke="#111"/><path d="M1021 784h33v35h-33z" fill="#cfccc3" stroke="#111" stroke-width="1.300"/>
      <ellipse cx="1039" cy="803.500" rx="8.500" ry="10.500" fill="#a8a08a" stroke="#111" stroke-width="1.300"/><ellipse cx="1040.500" cy="803.500" rx="6.500" ry="9.500" fill="#c7bea8" stroke="#333"/>
      <path d="M1024 787h2v2h-2zM1049 787h2v2h-2zM1024 815h2v2h-2zM1049 815h2v2h-2z" fill="#111"/>
      <!-- card slot -->
      <path d="M840 834h162v14H840z" fill="#9b9eac" stroke="#111" stroke-width="1.500"/>
      <path d="M840 834h23v4h-10v2h-13z" fill="#b3261e" stroke="#222"/><path d="M866 835h35v4l-4 4h-10l-3-5h-18z" fill="#c02a2a" stroke="#111"/><path d="M918 836h71v12h-71z" fill="#b32424" stroke="#111"/>
      <path d="M919 842l6-6 4 4 4-5 5 4 4-5 5 3 6-3 30 1-50 5-13 3zM912 836v6M990 836v12M936 847v-6l55-5" fill="#1c1010" stroke="#111"/>
      <path d="M842 846h76M992 846h9" stroke="#555"/>

      <!-- header pins -->
      <use href="#pin" x="650"/><use href="#pin" x="667"/><use href="#pin" x="676"/><use href="#pin" x="685"/>
      <path d="M650 781h5v6h-5zM664 781h6v14h-6zM681 781h8v14h-8z" fill="#b5b2a4" stroke="#333"/>
      <use href="#pin" x="389.500"/><use href="#pin" x="407.500"/><use href="#pin" x="425.500"/><use href="#pin" x="443.500"/><use href="#pin" x="461.500"/><use href="#pin" x="479.500"/><use href="#pin" x="497.500"/><use href="#pin" x="515"/><use href="#pin" x="533"/><use href="#pin" x="551"/><use href="#pin" x="569"/><use href="#pin" x="587"/><use href="#pin" x="605"/><use href="#pin" x="623"/><use href="#pin" x="641"/><use href="#pin" x="659"/><use href="#pin" x="676"/><use href="#pin" x="694"/><use href="#pin" x="712"/><use href="#pin" x="730"/><use href="#pin" x="748"/>
      <use href="#tail" x="389.500"/><use href="#tail" x="407.500"/><use href="#tail" x="425.500"/><use href="#tail" x="443.500"/><use href="#tail" x="461.500"/><use href="#tail" x="479.500"/><use href="#tail" x="497.500"/><use href="#tail" x="515"/><use href="#tail" x="533"/><use href="#tail" x="551"/><use href="#tail" x="569"/><use href="#tail" x="587"/><use href="#tail" x="605"/><use href="#tail" x="623"/><use href="#tail" x="641"/><use href="#tail" x="650"/><use href="#tail" x="659"/><use href="#tail" x="667"/><use href="#tail" x="676"/><use href="#tail" x="685"/><use href="#tail" x="694"/><use href="#tail" x="712"/><use href="#tail" x="730"/><use href="#tail" x="748"/>
      <use href="#cell" x="376"/><use href="#cell" x="412"/><use href="#cell" x="448"/><use href="#cell" x="483"/><use href="#cell" x="519"/><use href="#cell" x="555"/><use href="#cell" x="591"/><use href="#cell" x="627"/><use href="#cell" x="663"/><use href="#cell" x="698"/>
      <path d="M734 795h28.500v24H734z" fill="#d79f70"/><path d="M733 819v-6h12v6M752 819v-6h10" fill="none" stroke="#222"/>
      <path d="M376 795h386.500v24H376z" fill="none" stroke="#111"/>

      <!-- board -->
      <path d="M187 819h969v15H187z" fill="#55b95f"/><path d="M187 819h7v15h-7zM1148 819h8v15h-8z" fill="#6fca77"/>
      <path d="M187 819.500h969M187 833.500h969" stroke="#0c2a10" stroke-width="1.300"/><path d="M194.500 819v15M752 819v15M795 819v15M1147.500 819v15" stroke="#0c2a10"/>

      <!-- copper bodies -->
      <path d="M1677 655h67v70h-67z" fill="#c7832d"/><path d="M1742 655h2v70h-2z" fill="#efc18c"/>
      <path d="M1677.500 655v70M1696 655v70M1726 655v70M1741.500 655v70" stroke="#2a1a05" stroke-width="1.400"/>
      <path d="M2033 655h68v9.500h-68zM2108 655h121v9.500h-121z" fill="#e39a37"/>
      <path d="M2033.500 655v9.500h68M2043.500 655v9M2070.500 655v9M2093.500 655v9M2096 655v9M2098 655v9M2108.500 655v9.500h121v-9.500M2136 655v9M2146 655v9M2158 655v9" fill="none" stroke="#3a2408" stroke-width="1.300"/>
      <path d="M1677 654.500h67M2033 654.500h68M2108 654.500h121" stroke="#a184e0" stroke-width="2"/>
      <g><use href="#pt" x="1677" y="654.500"/><use href="#pt" x="1682" y="654.500"/><use href="#pt" x="1696" y="654.500"/><use href="#pt" x="1710" y="654.500"/><use href="#pt" x="1726" y="654.500"/><use href="#pt" x="1738" y="654.500"/><use href="#pt" x="1743" y="654.500"/>
      <use href="#pt" x="2033" y="654.500"/><use href="#pt" x="2043" y="654.500"/><use href="#pt" x="2050" y="654.500"/><use href="#pt" x="2057" y="654.500"/><use href="#pt" x="2064" y="654.500"/><use href="#pt" x="2071" y="654.500"/><use href="#pt" x="2084" y="654.500"/><use href="#pt" x="2088" y="654.500"/><use href="#pt" x="2093" y="654.500"/><use href="#pt" x="2098" y="654.500"/>
      <use href="#pt" x="2108" y="654.500"/><use href="#pt" x="2113" y="654.500"/><use href="#pt" x="2136" y="654.500"/><use href="#pt" x="2140" y="654.500"/><use href="#pt" x="2145" y="654.500"/><use href="#pt" x="2149" y="654.500"/><use href="#pt" x="2158" y="654.500"/><use href="#pt" x="2177" y="654.500"/><use href="#pt" x="2213" y="654.500"/><use href="#pt" x="2229" y="654.500"/></g>

      <!-- upper plates -->
      <path d="M357 694h1987v11H357z" fill="#2d2d2b"/><path d="M725 694h50v11h-50zM888 694h29v11h-29zM994 694h390v11H994zM1781 694h80v11h-80zM1921 694h86v11h-86zM2036 694h69v11h-69z" fill="#212120"/>
      <path d="M1740 694h41v11h-41zM2007 694h29v11h-29z" fill="#403f3b"/><path d="M2103 694h24v11h-24z" fill="#8c8b84"/><path d="M2326 694h18v11h-18z" fill="url(#gEnd)"/>
      <path d="M357 694.500h1987M357 704.500h1987M357.500 694v11M725.500 694v11M775.500 694v11M783.500 694v11M888.500 694v11M917.500 694v11M994.500 694v11M1298.500 694v11M1384.500 694v11M1572.500 694v11M1685.500 694v11M1781.500 694v11M1795.500 694v11M1804.500 694v11M1820.500 694v11M1832.500 694v11M1841.500 694v11M1850.500 694v11M1861.500 694v11M1902.500 694v11M1909.500 694v11M1914.500 694v11M1921.500 694v11M1953.500 694v11M1967.500 694v11M1974.500 694v11M1982.500 694v11M1993.500 694v11M2003.500 694v11M2007.500 694v11M2036.500 694v11M2052.500 694v11M2075.500 694v11M2092.500 694v11M2100.500 694v11M2124.500 694v11M2148.500 694v11M2223.500 694v11M2254.500 694v11M2307.500 694v11M2323.500 694v11M2327.500 694v11M2338.500 694v11" stroke="#0a0a0a"/>
      <path d="M329 725h2015v10H329z" fill="#d6d531"/><path d="M329 725h14v10h-14z" fill="#d9d45a"/><path d="M2075 725h30v10h-30zM2254 725h40v10h-40z" fill="#c4c330"/>
      <path d="M329 725.500h2015M329 734.500h2015" stroke="#4a4a10" stroke-width="1.200"/>
      <path d="M343.500 725v10M1015.500 725v10M1086.500 725v10M1642.500 725v10M1685.500 725v10M1781.500 725v10M1795.500 725v10M1804.500 725v10M1820.500 725v10M1832.500 725v10M1841.500 725v10M1850.500 725v10M1861.500 725v10M1902.500 725v10M1909.500 725v10M1914.500 725v10M1921.500 725v10M1953.500 725v10M1967.500 725v10M1974.500 725v10M1982.500 725v10M1993.500 725v10M2003.500 725v10M2007.500 725v10M2036.500 725v10M2052.500 725v10M2075.500 725v10M2092.500 725v10M2100.500 725v10M2105.500 725v10M2124.500 725v10M2148.500 725v10M2223.500 725v10M2254.500 725v10M2307.500 725v10M2323.500 725v10M2327.500 725v10M2338.500 725v10" stroke="#1d1d05"/>
    </svg>

    <svg class="viewcube" viewBox="0 0 90 80" role="img" aria-label="View cube">
      <defs><linearGradient id="gCube" x1="0" y1="0" x2="0" y2="1"><stop offset="0" stop-color="#f6f6f6"/><stop offset="1" stop-color="#d6d6d6"/></linearGradient><radialGradient id="gShadow"><stop offset="0" stop-color="#999"/><stop offset="1" stop-color="#fff" stop-opacity="0"/></radialGradient></defs>
      <ellipse cx="44" cy="69" rx="44" ry="6" fill="url(#gShadow)"/>
      <path d="M12 21l31-4v51l-31-4z" fill="url(#gCube)" stroke="#666"/><path d="M43 17l31 4v43l-31 4z" fill="url(#gCube)" stroke="#666"/>
      <path d="M37 27h6v32h-6zM43 27h6v32h-6z" fill="#d4d8df"/><path d="M43 17v51" stroke="#555"/>
      <text class="face" x="27" y="46" text-anchor="middle">BACK</text><text class="face" x="60" y="46" text-anchor="middle">LEFT</text>
      <path d="M37 71L75 65" stroke="#5fe35f" stroke-width="2"/><path d="M75.500 14v52" stroke="#8080ff" stroke-width="2"/>
      <text class="axis-z" x="75" y="12" text-anchor="middle">Z</text><text class="axis-y" x="32" y="75" text-anchor="middle">Y</text>
    </svg>

    <aside class="browser">
      <div class="panel-head">
        <button class="collapse" aria-label="Collapse"><svg viewBox="0 0 10 8"><path d="M4.500 1v6L1 4zM9 1v6L5.500 4z" fill="#777"/></svg></button>
        <h2>BROWSER</h2>
        <button class="tiny" aria-label="Hide"><svg><use href="#i-minus"/></svg></button>
      </div>
      <ul class="tree">
        <li class="l0"><button class="tw" aria-label="Toggle"><svg><use href="#i-down"/></svg></button><div class="node root purple"><svg><use href="#i-eye"/></svg><span class="chosen"><svg><use href="#i-assembly"/></svg><b>UV_exposed_surface_defec...</b></span><svg><use href="#i-radio"/></svg></div></li>
        <li class="l1"><button class="tw" aria-label="Toggle"><svg><use href="#i-right"/></svg></button><div class="node wider"><svg><use href="#i-gear"/></svg><span>Document Settings</span></div></li>
        <li class="l1"><button class="tw" aria-label="Toggle"><svg><use href="#i-right"/></svg></button><div class="node"><svg><use href="#i-folder"/></svg><span>Named Views</span></div></li>
        <li class="l1"><button class="tw" aria-label="Toggle"><svg><use href="#i-right"/></svg></button><div class="node"><svg><use href="#i-hidden"/></svg><svg><use href="#i-folder"/></svg><span>Origin</span></div></li>
        <li class="l1"><button class="tw" aria-label="Toggle"><svg><use href="#i-right"/></svg></button><div class="node purple"><svg><use href="#i-eye"/></svg><svg><use href="#i-grounded"/></svg><svg><use href="#i-link"/></svg><span>RASPBERRY_PI_5 v1:1</span></div></li>
        <li class="l1"><button class="tw" aria-label="Toggle"><svg><use href="#i-down"/></svg></button><div class="node red wider"><svg><use href="#i-eye"/></svg><svg><use href="#i-cube"/></svg><span>circular_conveyor_shield:1</span></div></li>
        <li class="l2"><button class="tw" aria-label="Toggle"><svg><use href="#i-right"/></svg></button><div class="node"><svg><use href="#i-hidden"/></svg><svg><use href="#i-folder"/></svg><span>Origin</span></div></li>
        <li class="l2"><button class="tw" aria-label="Toggle"><svg><use href="#i-down"/></svg></button><div class="node"><svg><use href="#i-eye"/></svg><svg><use href="#i-folder"/></svg><span>Bodies</span></div></li>
        <li class="l3"><button class="tw" aria-label="Toggle"><svg><use href="#i-right"/></svg></button><div class="node wide"><svg><use href="#i-eye"/></svg><svg><use href="#i-folder"/></svg><span>pcb_silkscreen (18)</span></div></li>
        <li class="l3"><button class="tw" aria-label="Toggle"><svg><use href="#i-right"/></svg></button><div class="node tight"><svg><use href="#i-eye"/></svg><svg><use href="#i-folder"/></svg><span>pcb_f_Cu (7)</span></div></li>
        <li class="l3 leaf"><div class="node tight"><svg><use href="#i-eye"/></svg><svg><use href="#i-cyl"/></svg><span>pcb_base</span></div></li>
        <li class="l2"><button class="tw" aria-label="Toggle"><svg><use href="#i-down"/></svg></button><div class="node"><svg><use href="#i-eye"/></svg><svg><use href="#i-folder"/></svg><span>Sketches</span></div></li>
        <li class="l3 leaf"><div class="node wide"><svg><use href="#i-hidden"/></svg><svg><use href="#i-sketch"/></svg><span>pcb_base_shape</span></div></li>
        <li class="l3 leaf"><div class="node wide"><svg><use href="#i-hidden"/></svg><svg><use href="#i-locked"/></svg><span>part_placement</span></div></li>
        <li class="l3 leaf"><div class="node"><svg><use href="#i-hidden"/></svg><svg><use href="#i-locked"/></svg><span>pcb_Silk</span></div></li>
        <li class="l3 leaf"><div class="node"><svg><use href="#i-hidden"/></svg><svg><use href="#i-locked"/></svg><span>pcb_Edge</span></div></li>
        <li class="l3 leaf"><div class="node tight"><svg><use href="#i-eye"/></svg><svg><use href="#i-locked"/></svg><span>pcb_F_Cu</span></div></li>
      </ul>
    </aside>

    <div class="dock">
      <div class="panel-head comments"><h2>COMMENTS</h2><button class="tiny" aria-label="Add comment"><svg><use href="#i-plus"/></svg></button></div>
      <div class="navbar">
        <button class="drop" aria-label="Orbit"><svg viewBox="0 0 16 16"><path d="M8 0v16" stroke="#4ba3e3" stroke-width="1.600" stroke-dasharray="5 1"/><path d="M13 4.500c5 2.500 1 6-5 6s-11-3.500-5-6c2-.8 5-1 8-.5" fill="none" stroke="#555" stroke-width="1.300"/><path d="M10 13l-3-2.500L10 8z" fill="#555"/></svg><svg class="caret"><use href="#i-caret"/></svg></button>
        <button aria-label="Look At"><svg viewBox="0 0 16 16"><path d="M1.500 5.500h13v9h-13z" fill="#ddd" stroke="#666" stroke-width="1.300"/><path d="M1.500 5.500L5 1.500l1 1.500 5-2v2L7 5.500" fill="#eee" stroke="#666"/><path d="M4 7h8v6H4z" fill="#56a8e4"/></svg></button>
        <button aria-label="Pan"><svg viewBox="0 0 16 16"><path d="M5 15.500C3 13 2 11 .8 9.500c.5-1 1.500-.8 2.700.7L4 9 2.700 3.500c.5-1 1.300-.7 1.600.2l1.500 3.800L6 1.500c.6-.9 1.500-.7 1.600.2L8 7l1.500-5c.7-.8 1.400-.4 1.400.5L10.500 8l2.500-4c.8-.5 1.300 0 1 .9L12 10.500c-.2 2-.5 3.500-2 5z" fill="#fff" stroke="#888"/></svg></button>
        <button aria-label="Zoom"><svg viewBox="0 0 16 16"><circle cx="5.500" cy="7.500" r="4.500" fill="#ddd" stroke="#777" stroke-width="1.300"/><path d="M9 11l3.500 4" stroke="#8a5a2a" stroke-width="2"/><path d="M13 .5v4M11 2.500h4M11 6.500h4" stroke="#555"/></svg></button>
        <button class="drop" aria-label="Fit"><svg viewBox="0 0 16 16"><rect x=".5" y=".5" width="15" height="15" fill="none" stroke="#444" stroke-dasharray="2 1"/><circle cx="7.500" cy="6.500" r="5.500" fill="#ddd" stroke="#777" stroke-width="1.300"/><path d="M11.500 11l4 4.500" stroke="#8a5a2a" stroke-width="2"/></svg><svg class="caret"><use href="#i-caret"/></svg></button>
        <button class="drop" aria-label="Display Settings"><svg viewBox="0 0 16 16"><path d="M.7 2.500h14.600v10H.7z" fill="#eee" stroke="#666" stroke-width="1.300"/><path d="M3 4.500h10v6H3z" fill="#aaa" stroke="#888"/><path d="M4 14.500h8" stroke="#666" stroke-width="1.500"/></svg><svg class="caret"><use href="#i-caret"/></svg></button>
        <button class="drop" aria-label="Grid and Snaps"><svg viewBox="0 0 16 16"><path d="M1.500 1.500h12v12h-12zM5.500 1.500v12M9.500 1.500v12M1.500 5.500h12M1.500 9.500h12" fill="#fff" stroke="#666"/></svg><svg class="caret"><use href="#i-caret"/></svg></button>
        <button class="drop" aria-label="Viewports"><svg viewBox="0 0 16 16"><path d="M.7 2h14.600v12H.7zM8 2v12M.7 8h14.600" fill="#e6e6e6" stroke="#666" stroke-width="1.300"/><path d="M3 4h3v2H3zM10 4h3v2h-3zM3 10h3v2H3zM10 10h3v2h-3z" fill="none" stroke="#aaa"/></svg><svg class="caret"><use href="#i-caret"/></svg></button>
      </div>
    </div>
  </main>

  <footer class="timeline">
    <div class="playback">
      <button aria-label="Go to start"><svg viewBox="0 0 14 14"><path d="M2 1.500v11M12.500 2v10L4 7z" fill="#777" stroke="#777" stroke-width="1.400"/></svg></button>
      <button aria-label="Step back"><svg viewBox="0 0 14 14"><path d="M9.500 1.500v11L.5 7z" fill="#777"/><path d="M12 5v5" stroke="#777" stroke-width="1.500"/></svg></button>
      <button aria-label="Play"><svg viewBox="0 0 14 14"><path d="M2 0l11 7-11 7z" fill="#777"/></svg></button>
      <button aria-label="Step forward"><svg viewBox="0 0 14 14"><path d="M4.500 1.500v11l9-5.500z" fill="#777"/><path d="M2 5v5" stroke="#777" stroke-width="1.500"/></svg></button>
      <button aria-label="Go to end"><svg viewBox="0 0 14 14"><path d="M12 1.500v11M1.500 2v10L10 7z" fill="#777" stroke="#777" stroke-width="1.400"/></svg></button>
    </div>
    <div class="features">
      <i class="band purple-band span2"></i><i class="band red-band span5"></i><i class="band purple-band span1"></i><i class="band red-band span12"></i>
      <button aria-label="Insert"><svg><use href="#i-insertlink"/></svg></button>
      <button aria-label="Component"><svg><use href="#i-newcomp"/></svg></button>
      <button aria-label="Sketch"><svg><use href="#i-sketch"/></svg></button>
      <button aria-label="Extrude"><svg><use href="#i-extrude"/></svg></button>
      <button class="current" aria-label="Sketch"><svg><use href="#i-sketch"/></svg></button>
      <button aria-label="Extrude"><svg><use href="#i-extrude"/></svg></button>
      <button aria-label="Extrude"><svg><use href="#i-extrude"/></svg></button>
      <button aria-label="Extrude"><svg><use href="#i-extrude"/></svg></button>
      <button aria-label="Joint"><svg><use href="#i-joint"/></svg></button>
      <button aria-label="Extrude"><svg><use href="#i-extrude"/></svg></button>
      <button aria-label="Extrude"><svg><use href="#i-extrude"/></svg></button>
      <button aria-label="Sketch"><svg><use href="#i-sketch"/></svg></button>
      <button aria-label="Fillet"><svg><use href="#i-fillet"/></svg></button>
      <button aria-label="Fillet"><svg><use href="#i-fillet"/></svg></button>
      <button aria-label="Sketch"><svg><use href="#i-sketch"/></svg></button>
      <button aria-label="Extrude"><svg><use href="#i-extrude"/></svg></button>
      <button aria-label="Extrude"><svg><use href="#i-extrude"/></svg></button>
      <button aria-label="Extrude"><svg><use href="#i-extrude"/></svg></button>
      <button aria-label="Extrude"><svg><use href="#i-extrude"/></svg></button>
      <button aria-label="Sketch"><svg><use href="#i-sketch"/></svg></button>
      <svg class="marker" viewBox="0 0 12 30"><path d="M0 0h12v5L7 10v20H5V10L0 5z" fill="#333"/></svg>
    </div>
    <button class="settings" aria-label="Timeline settings"><svg><use href="#i-gear"/></svg></button>
  </footer>
</div>
</body>
</html>
```

FILE: styles.css
```css
* { box-sizing: border-box; }

body {
  margin: 0;
  min-height: 100vh;
  padding: 1px 1px 5px 0;
  display: flex;
  flex-direction: column;
  background: #222122;
  color: #333;
  font: 10px/12px "Liberation Sans", Arial, sans-serif;
}

button {
  border: 0;
  padding: 0;
  background: none;
  color: inherit;
  font: inherit;
  display: flex;
  align-items: center;
  justify-content: center;
}

h1, h2, ul { margin: 0; padding: 0; font-weight: normal; }
svg { display: block; flex: none; }
.sprite { position: absolute; width: 0; height: 0; }
.caret { width: 8px; height: 6px; }
.caret.faded { opacity: .6; }

.window {
  flex: 1;
  display: flex;
  flex-direction: column;
  background: #f4f4f4;
  border-radius: 8px 8px 0 0;
  overflow: hidden;
}

/* Title bar */
.titlebar {
  height: 28px;
  padding-left: 9px;
  display: flex;
  align-items: center;
  gap: 6px;
  background: #f3f3f3;
}
.app-logo { width: 13px; height: 16px; }
.titlebar h1 { flex: 1; color: #888; font: 11px/16px "Open Sans", sans-serif; }
.win-controls { display: flex; }
.win-controls button { width: 43px; height: 28px; }
.win-controls svg { width: 12px; height: 12px; }

/* Quick access and document tab */
.strip {
  height: 30px;
  display: flex;
  background: #d8d8d8;
}
.quick {
  width: 213px;
  padding-left: 8px;
  display: flex;
  align-items: center;
}
.quick button { gap: 4px; }
.quick svg:first-child { width: 12px; height: 12px; }
.quick .q-file { margin-left: 19px; }
.quick .q-file svg:first-child { height: 14px; }
.quick .q-save { margin-left: 15px; }
.quick .q-undo { margin-left: 18px; }
.quick .q-redo { margin-left: 11px; }
.quick .q-home { margin: 6px 0 0 17px; }
.quick .q-home svg { width: 14px; height: 13px; }
.doc-tab {
  flex: 1;
  margin-top: 4px;
  padding-right: 5px;
  display: flex;
  align-items: center;
  background: #f4f4f4;
  border-radius: 4px 4px 0 0;
}
.doc-name {
  flex: 1;
  display: flex;
  align-items: center;
  justify-content: center;
  gap: 4px;
  color: #333;
  font: 12px/14px Roboto, sans-serif;
  text-decoration: none;
}
.doc-name svg { width: 14px; height: 15px; }
.doc-tab button svg { width: 10px; height: 10px; }
.account {
  padding: 0 12px 0 10px;
  display: flex;
  align-items: center;
}
.account button { width: 31px; }
.account svg { width: 14px; height: 14px; }
.account .add { margin-right: 9px; }
.account .avatar { width: 22px; margin-left: 14px; }
.account .avatar svg { width: 22px; height: 22px; }

/* Ribbon */
.ribbon {
  height: 79px;
  padding: 2px 0 0 11px;
  display: flex;
  background: #f4f4f4;
  font: 10px/12px Roboto, sans-serif;
}
.workspace {
  width: 102px;
  height: 57px;
  margin-top: 8px;
  gap: 8px;
  border: 1px solid #ccc;
  border-radius: 4px;
  font-weight: bold;
}
.tools { padding-left: 4px; }
.tabs {
  display: flex;
  gap: 25px;
  padding-left: 13px;
}
.tabs button { height: 20px; padding: 0 11px; border-bottom: 2px solid transparent; }
.tabs .active { border-color: #333; font-weight: bold; }
.groups { display: flex; padding-top: 3px; }
.group { padding: 0 6px; border-right: 1px solid #ccc; }
.group.snug { padding: 0 5px; }
.group.roomy { padding: 0 8px; }
.group.last { border: 0; padding: 0 12px; }
.icons { display: flex; justify-content: center; }
.icons button { width: 40px; height: 30px; }
.icons svg { width: 30px; height: 30px; }
.svgfile text { font: bold 8px "Liberation Sans", sans-serif; }
.label { margin: 6px auto 0; gap: 4px; white-space: nowrap; }

/* Canvas */
.canvas {
  position: relative;
  flex: 1;
  display: flex;
  flex-direction: column;
  justify-content: space-between;
  background: #fff;
}
.scene { position: absolute; inset: 0; width: 100%; height: 100%; }
.viewcube { position: absolute; top: 17px; right: 12px; width: 90px; height: 80px; }
.face { font: bold 8px "Liberation Sans", sans-serif; fill: #888; }
.axis-z { font: 14px "Liberation Sans", sans-serif; fill: #8080ff; }
.axis-y { font: 12px "Liberation Sans", sans-serif; fill: #5fe35f; }

.browser, .dock { position: relative; }
.panel-head {
  width: 281px;
  height: 24px;
  padding: 2px 10px 0 4px;
  display: flex;
  align-items: center;
  background: #f4f4f4;
  border: 1px solid #e0e0e0;
}
.panel-head h2 { flex: 1; font: 11px/14px Roboto, sans-serif; color: #444; }
.collapse { width: 21px; justify-content: flex-start; }
.collapse svg { width: 10px; height: 8px; }
.tiny svg { width: 10px; height: 10px; }
.browser { padding: 4px 0 0 4px; }

.tree { margin-top: 4px; list-style: none; }
.tree li { height: 19px; margin-bottom: 3px; display: flex; }
.tree li:nth-child(even) { margin-bottom: 4px; }
.tw { width: 22px; padding-right: 4px; background: #fcfcfc; }
.tw svg { width: 10px; height: 10px; }
.l0 { padding-left: 12px; }
.l1 { padding-left: 28px; }
.l2 { padding-left: 45px; }
.l3 { padding-left: 62px; }
.l3.leaf { padding-left: 84px; }
.node {
  padding-right: 16px;
  display: flex;
  align-items: center;
  gap: 4px;
  background: #f4f4f4;
}
.node.tight { padding-right: 12px; }
.node.wide { padding-right: 24px; }
.node.wider { padding-right: 28px; }
.node.root { padding-right: 4px; gap: 0; }
.node svg { width: 20px; height: 16px; }
.node > span:not(.chosen) { padding-left: 7px; }
.node.purple { border-left: 5px solid #e08fe6; }
.node.red { border-left: 5px solid #ffabab; }
.chosen {
  width: 192px;
  height: 19px;
  margin-left: 3px;
  display: flex;
  align-items: center;
  gap: 10px;
  background: #d8d8d8;
}

.dock {
  padding: 0 4px 4px;
  display: grid;
  grid-template-columns: 1fr auto 1fr;
}
.comments { margin-top: 1px; padding-left: 25px; }
.navbar {
  width: 224px;
  height: 23px;
  padding: 0 2px;
  display: flex;
  align-items: center;
  justify-content: space-between;
  background: #f4f4f4;
}
.navbar button { width: 24px; }
.navbar svg:first-child { width: 16px; height: 16px; }
.navbar .drop { width: 26px; gap: 2px; }

/* Timeline */
.timeline {
  height: 43px;
  display: flex;
  background: #f4f4f4;
}
.playback { padding: 6px 0 0 2px; display: flex; }
.playback button { width: 24px; height: 34px; }
.playback svg { width: 14px; height: 14px; }
.features {
  position: relative;
  width: 450px;
  height: 39px;
  margin-left: 11px;
  padding-top: 8px;
  display: grid;
  grid-template-columns: repeat(20, 1fr);
  grid-template-rows: 5px 20px 6px;
}
.features::after {
  content: "";
  grid-column: 1 / -1;
  grid-row: 3;
  margin: 0 11px;
  border: solid #bbb;
  border-width: 0 1px 2px;
  background: repeating-linear-gradient(90deg, #bbb 0 1px, transparent 1px calc(100% / 19));
}
.band { margin: 0 2px; height: 5px; }
.purple-band { background: #dd92e6; }
.red-band { background: #ffabab; }
.span2 { grid-column: span 2; }
.span5 { grid-column: span 5; }
.span12 { grid-column: span 12; }
.features button { grid-row: 2; height: 20px; }
.features button svg { width: 16px; height: 16px; }
.features .current { background: #f8cf95; border-radius: 2px; }
.marker { position: absolute; right: -6px; top: 10px; width: 12px; height: 30px; }
.settings { margin: 6px 12px 0 auto; height: 34px; }
.settings svg { width: 15px; height: 15px; }
```
